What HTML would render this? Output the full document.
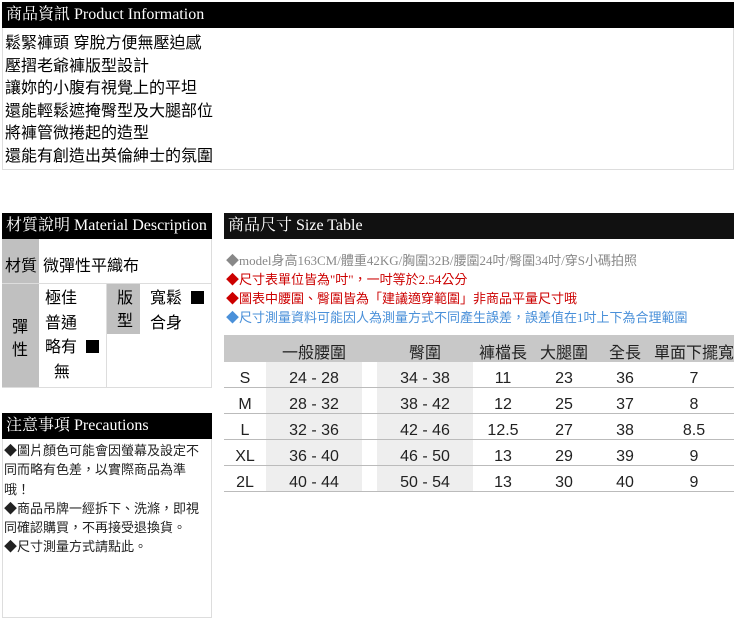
<!DOCTYPE html>
<html><head><meta charset="utf-8"><style>
*{margin:0;padding:0;box-sizing:border-box}
body{width:735px;height:619px;background:#fff;position:relative;font-family:"Liberation Serif","Noto Serif CJK SC","Noto Sans CJK TC",serif;color:#000;overflow:hidden}
.a{position:absolute}
.hd{position:absolute;background:#000;color:#fff;font-size:16px;line-height:26px;padding-left:4px;white-space:nowrap}
.g{background:#c0c0c0;position:absolute}
.t{position:absolute;font-size:16px;white-space:nowrap;font-family:"Liberation Sans","Noto Sans CJK TC",sans-serif}
.sq{display:inline-block;width:13px;height:13px;background:#000;vertical-align:-1px}
.n{position:absolute;left:226px;font-size:13px;font-family:"Liberation Serif","Noto Sans CJK TC",serif;white-space:nowrap}
.c{position:absolute;text-align:center;font-size:16px;font-family:"Liberation Sans","Noto Sans CJK TC",sans-serif;color:#222}
</style></head><body>
<div class="a" style="left:2px;top:2px;width:732px;height:168px;border:1px solid #ddd"></div>
<div class="hd" style="left:2px;top:2px;width:732px">商品資訊 Product Information</div>
<div class="t" style="left:5px;top:33px;font-size:16px;line-height:22.5px">鬆緊褲頭 穿脫方便無壓迫感<br>壓摺老爺褲版型設計<br>讓妳的小腹有視覺上的平坦<br>還能輕鬆遮掩臀型及大腿部位<br>將褲管微捲起的造型<br>還能有創造出英倫紳士的氛圍</div>

<div class="a" style="left:2px;top:213px;width:210px;height:175px;border:1px solid #ddd"></div>
<div class="hd" style="left:2px;top:213px;width:210px">材質說明 Material Description</div>
<div class="g" style="left:2px;top:239px;width:37px;height:45px"></div>
<div class="a" style="left:2px;top:283px;width:210px;height:1px;background:#ddd"></div>
<div class="t" style="left:5px;top:252px">材質</div>
<div class="t" style="left:43px;top:252px">微彈性平織布</div>
<div class="g" style="left:2px;top:284px;width:37px;height:103px"></div>
<div class="t" style="left:12px;top:316px;line-height:23px">彈<br>性</div>
<div class="t" style="left:45px;top:287px;line-height:24.5px">極佳<br>普通<br>略有 &nbsp;<span class="sq"></span><br>&nbsp;&nbsp;無</div>
<div class="a" style="left:106px;top:284px;width:1px;height:103px;background:#ddd"></div>
<div class="g" style="left:107px;top:284px;width:33px;height:50px"></div>
<div class="t" style="left:117px;top:287px;line-height:23px">版<br>型</div>
<div class="t" style="left:150px;top:287px;line-height:24.5px">寬鬆 &nbsp;<span class="sq"></span><br>合身</div>

<div class="a" style="left:2px;top:413px;width:210px;height:205px;border:1px solid #ddd"></div>
<div class="hd" style="left:2px;top:413px;width:210px">注意事項 Precautions</div>
<div class="t" style="left:4px;top:441px;font-size:13px;line-height:19.3px;width:200px;white-space:normal;color:#222;word-break:break-all">◆圖片顏色可能會因螢幕及設定不同而略有色差，以實際商品為準哦！<br>◆商品吊牌一經拆下、洗滌，即視同確認購買，不再接受退換貨。<br>◆尺寸測量方式請點此。</div>

<div class="hd" style="left:224px;top:213px;width:510px;background:#111">商品尺寸 Size Table</div>
<div class="n" style="top:250px;color:#888">◆model身高163CM/體重42KG/胸圍32B/腰圍24吋/臀圍34吋/穿S小碼拍照</div>
<div class="n" style="top:269px;color:#c00">◆尺寸表單位皆為"吋"，一吋等於2.54公分</div>
<div class="n" style="top:288px;color:#c00">◆圖表中腰圍、臀圍皆為「建議適穿範圍」非商品平量尺寸哦</div>
<div class="n" style="top:307px;color:#4a90d9">◆尺寸測量資料可能因人為測量方式不同產生誤差，誤差值在1吋上下為合理範圍</div>

<div class="a" style="left:224px;top:335px;width:510px;height:27px;background:#c8c8c8"></div>
<div class="a" style="left:266px;top:362px;width:96px;height:130px;background:#eee"></div>
<div class="a" style="left:377px;top:362px;width:96px;height:130px;background:#eee"></div>
<div class="a" style="left:224px;top:387px;width:510px;height:1px;background:#bbb"></div>
<div class="a" style="left:224px;top:413px;width:510px;height:1px;background:#bbb"></div>
<div class="a" style="left:224px;top:439px;width:510px;height:1px;background:#bbb"></div>
<div class="a" style="left:224px;top:465px;width:510px;height:1px;background:#bbb"></div>
<div class="a" style="left:224px;top:491px;width:510px;height:1px;background:#bbb"></div>
<div class="c" style="left:264px;width:100px;top:339px">一般腰圍</div>
<div class="c" style="left:375px;width:100px;top:339px">臀圍</div>
<div class="c" style="left:473px;width:60px;top:339px">褲檔長</div>
<div class="c" style="left:533px;width:62px;top:339px">大腿圍</div>
<div class="c" style="left:595px;width:60px;top:339px">全長</div>
<div class="c" style="left:650px;width:88px;top:339px">單面下擺寬</div>

<div class="c" style="left:224px;width:42px;top:366px;line-height:26px">S<br>M<br>L<br>XL<br>2L</div>
<div class="c" style="left:264px;width:100px;top:366px;line-height:26px">24 - 28<br>28 - 32<br>32 - 36<br>36 - 40<br>40 - 44</div>
<div class="c" style="left:375px;width:100px;top:366px;line-height:26px">34 - 38<br>38 - 42<br>42 - 46<br>46 - 50<br>50 - 54</div>
<div class="c" style="left:473px;width:60px;top:366px;line-height:26px">11<br>12<br>12.5<br>13<br>13</div>
<div class="c" style="left:534px;width:60px;top:366px;line-height:26px">23<br>25<br>27<br>29<br>30</div>
<div class="c" style="left:595px;width:60px;top:366px;line-height:26px">36<br>37<br>38<br>39<br>40</div>
<div class="c" style="left:664px;width:60px;top:366px;line-height:26px">7<br>8<br>8.5<br>9<br>9</div>
</body></html>
